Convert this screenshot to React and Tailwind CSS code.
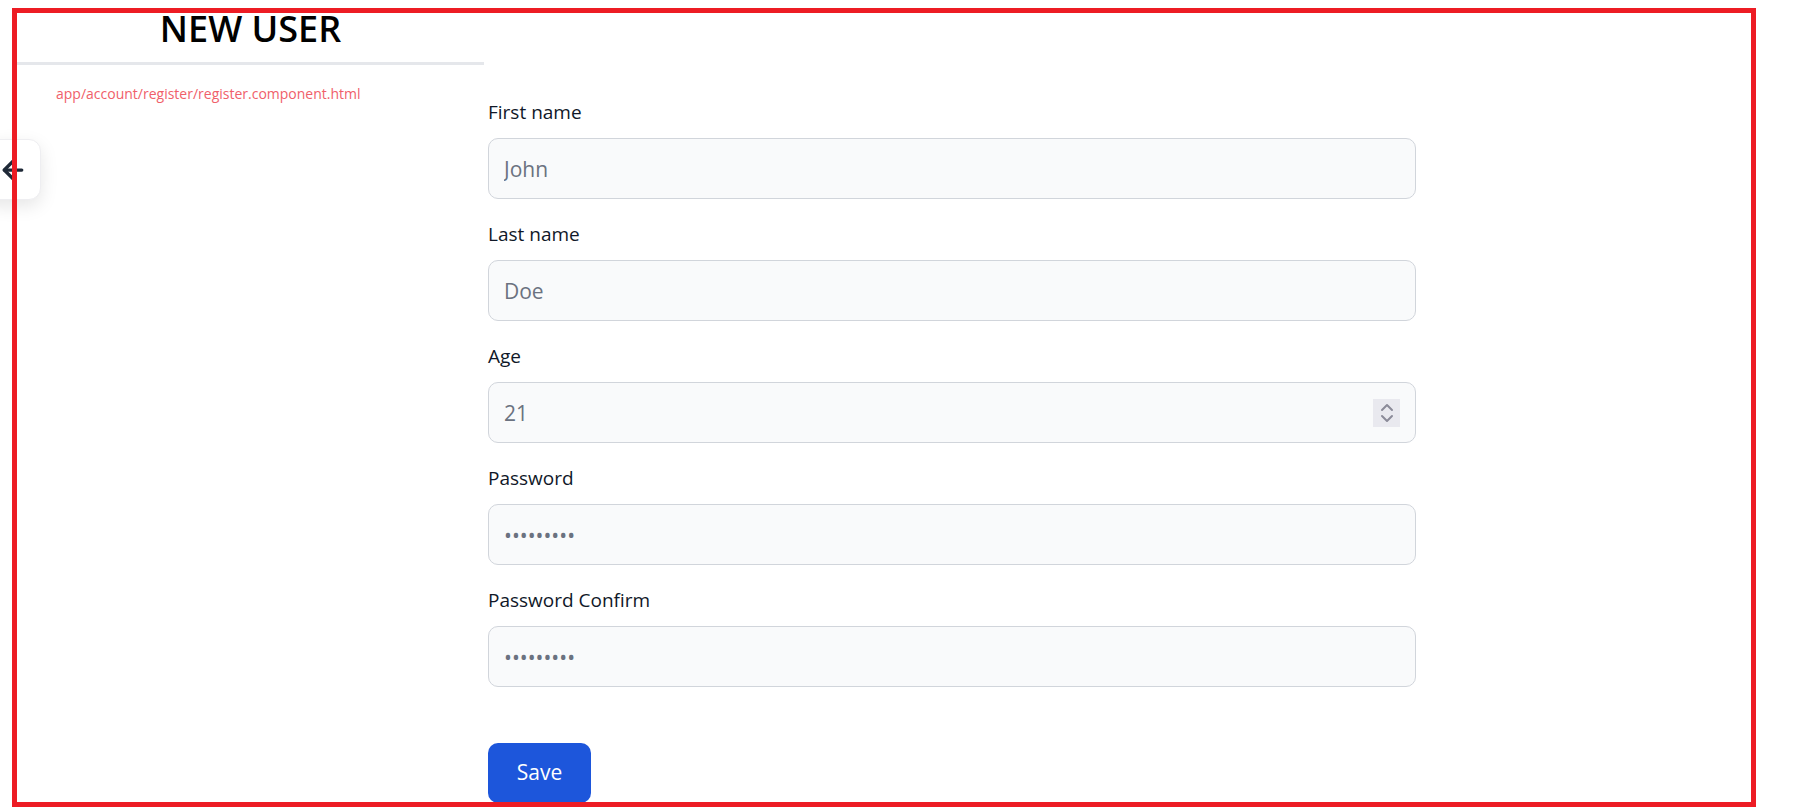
import React from 'react';

const fields = [
  { id: 'firstName', label: 'First name', type: 'text', placeholder: 'John' },
  { id: 'lastName', label: 'Last name', type: 'text', placeholder: 'Doe' },
  { id: 'age', label: 'Age', type: 'number', placeholder: '21' },
  { id: 'password', label: 'Password', type: 'password', placeholder: '•••••••••' },
  { id: 'passwordConfirm', label: 'Password Confirm', type: 'password', placeholder: '•••••••••' },
];

function Spinner() {
  return (
    <span className="absolute right-[16px] top-1/2 -translate-y-1/2 w-[27px] h-[28px] bg-[#e9e9ef] flex items-center justify-center pointer-events-none">
      <svg width="14" height="22" viewBox="0 0 14 22" fill="none" stroke="#8b8b99" strokeWidth="2" strokeLinecap="round" strokeLinejoin="round">
        <path d="M2 8l5-5 5 5" />
        <path d="M2 14l5 5 5-5" />
      </svg>
    </span>
  );
}

export default function App() {
  return (
    <main
      className="relative w-full h-[808px] overflow-hidden bg-white"
      style={{ fontFamily: '"Open Sans", "Noto Sans", sans-serif' }}
    >
      <div className="flex items-start">
        <aside className="ml-[17px] w-[467px] shrink-0">
          <h1 className="mt-[7px] text-center text-[36px] leading-[44px] font-semibold text-black">NEW USER</h1>
          <div className="mt-[11px] h-[3px] bg-[#e5e7eb]" />
          <p className="mt-[19px] pl-[39px] text-[14px] leading-[20px] text-[#f0606a]">
            app/account/register/register.component.html
          </p>
        </aside>

        <form className="ml-[4px] w-[928px] pt-[98px]" onSubmit={(e) => e.preventDefault()}>
          {fields.map((f) => (
            <div key={f.id} className="mb-[21px]">
              <label htmlFor={f.id} className="block text-[19px] leading-[28px] text-gray-900">
                {f.label}
              </label>
              <div className="relative mt-[12px]">
                <input
                  id={f.id}
                  type="text"
                  placeholder={f.placeholder}
                  className="block w-full h-[61px] px-[15px] rounded-[10px] border border-[#d1d5db] bg-[#f9fafb] text-[21px] text-gray-900 placeholder:text-[#6b7280] outline-none"
                />
                {f.type === 'number' && <Spinner />}
              </div>
            </div>
          ))}
          <button
            type="submit"
            className="mt-[35px] w-[103px] h-[60px] rounded-[10px] bg-[#1d56db] text-white text-[21px]"
          >
            Save
          </button>
        </form>
      </div>

      <button
        type="button"
        className="absolute left-[-19px] top-[139px] w-[60px] h-[61px] rounded-xl bg-white border border-[#eeeef1] shadow-[0_6px_18px_rgba(0,0,0,0.10)] flex items-center justify-center"
      >
        <svg className="ml-[4px]" width="30" height="30" viewBox="0 0 24 24" fill="none" stroke="#1f2937" strokeWidth="2.6" strokeLinecap="round" strokeLinejoin="round">
          <path d="M19 12H5" />
          <path d="M12 19l-7-7 7-7" />
        </svg>
      </button>

      <div className="absolute left-[12px] top-[8px] w-[1744px] h-[799px] border-[5px] border-[#ed1c24] pointer-events-none" />
    </main>
  );
}
